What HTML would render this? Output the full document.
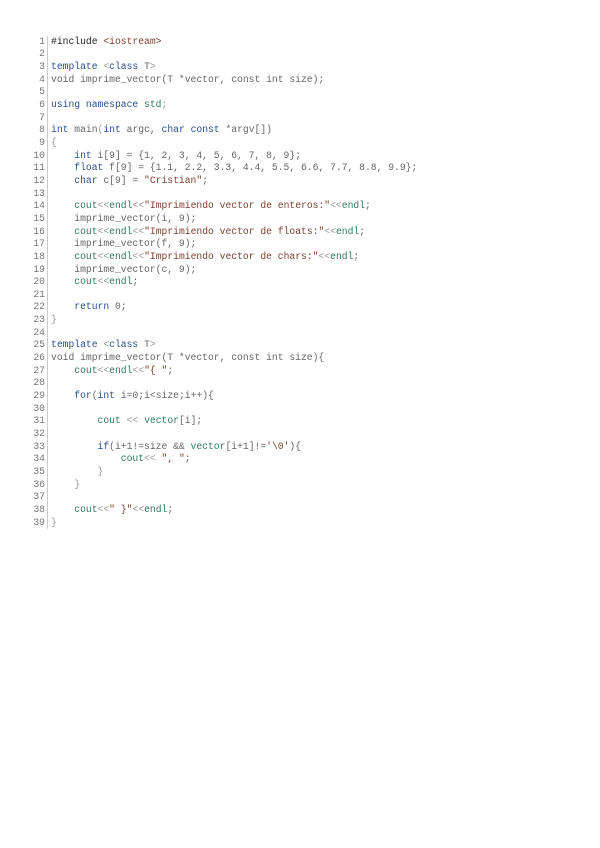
<!DOCTYPE html>
<html><head><meta charset="utf-8"><style>
html,body{margin:0;padding:0;background:#fff;width:600px;height:848px;overflow:hidden}
#c{position:absolute;left:0;top:35.7px;font-family:"Liberation Mono",monospace;font-size:9.7px;line-height:12.66px;color:#666}
.l{display:flex;height:12.66px;white-space:pre}
.n{width:45px;text-align:right;color:#777;padding-right:2px;border-right:1px solid #ccc;margin-right:3px}
.k{color:#2a4f8a}.g{color:#2d7a62}.s{color:#7b3f2e}.p{color:#999}.b{color:#222}
</style></head><body><div id="c">
<div class="l"><span class="n">1</span><span><span class="b">#include</span> <span class="s">&lt;iostream&gt;</span></span></div>
<div class="l"><span class="n">2</span><span></span></div>
<div class="l"><span class="n">3</span><span><span class="k">template</span> <span class="p">&lt;</span><span class="k">class</span> T<span class="p">&gt;</span></span></div>
<div class="l"><span class="n">4</span><span>void imprime_vector(T *vector, const int size);</span></div>
<div class="l"><span class="n">5</span><span></span></div>
<div class="l"><span class="n">6</span><span><span class="k">using namespace</span> <span class="g">std</span><span class="p">;</span></span></div>
<div class="l"><span class="n">7</span><span></span></div>
<div class="l"><span class="n">8</span><span><span class="k">int</span> main<span class="p">(</span><span class="k">int</span> argc, <span class="k">char const</span> *argv[])</span></div>
<div class="l"><span class="n">9</span><span class="p">{</span></div>
<div class="l"><span class="n">10</span><span>    <span class="k">int</span> i[9] = {1, 2, 3, 4, 5, 6, 7, 8, 9};</span></div>
<div class="l"><span class="n">11</span><span>    <span class="k">float</span> f[9] = {1.1, 2.2, 3.3, 4.4, 5.5, 6.6, 7.7, 8.8, 9.9};</span></div>
<div class="l"><span class="n">12</span><span>    <span class="k">char</span> c[9] = <span class="s">"Cristian"</span>;</span></div>
<div class="l"><span class="n">13</span><span></span></div>
<div class="l"><span class="n">14</span><span>    <span class="g">cout</span><span class="p">&lt;&lt;</span><span class="g">endl</span><span class="p">&lt;&lt;</span><span class="s">"Imprimiendo vector de enteros:"</span><span class="p">&lt;&lt;</span><span class="g">endl</span>;</span></div>
<div class="l"><span class="n">15</span><span>    imprime_vector(i, 9);</span></div>
<div class="l"><span class="n">16</span><span>    <span class="g">cout</span><span class="p">&lt;&lt;</span><span class="g">endl</span><span class="p">&lt;&lt;</span><span class="s">"Imprimiendo vector de floats:"</span><span class="p">&lt;&lt;</span><span class="g">endl</span>;</span></div>
<div class="l"><span class="n">17</span><span>    imprime_vector(f, 9);</span></div>
<div class="l"><span class="n">18</span><span>    <span class="g">cout</span><span class="p">&lt;&lt;</span><span class="g">endl</span><span class="p">&lt;&lt;</span><span class="s">"Imprimiendo vector de chars:"</span><span class="p">&lt;&lt;</span><span class="g">endl</span>;</span></div>
<div class="l"><span class="n">19</span><span>    imprime_vector(c, 9);</span></div>
<div class="l"><span class="n">20</span><span>    <span class="g">cout</span><span class="p">&lt;&lt;</span><span class="g">endl</span>;</span></div>
<div class="l"><span class="n">21</span><span></span></div>
<div class="l"><span class="n">22</span><span>    <span class="k">return</span> 0;</span></div>
<div class="l"><span class="n">23</span><span class="p">}</span></div>
<div class="l"><span class="n">24</span><span></span></div>
<div class="l"><span class="n">25</span><span><span class="k">template</span> <span class="p">&lt;</span><span class="k">class</span> T<span class="p">&gt;</span></span></div>
<div class="l"><span class="n">26</span><span>void imprime_vector(T *vector, const int size){</span></div>
<div class="l"><span class="n">27</span><span>    <span class="g">cout</span><span class="p">&lt;&lt;</span><span class="g">endl</span><span class="p">&lt;&lt;</span><span class="s">"{ "</span>;</span></div>
<div class="l"><span class="n">28</span><span></span></div>
<div class="l"><span class="n">29</span><span>    <span class="k">for</span>(<span class="k">int</span> i=0;i&lt;size;i++){</span></div>
<div class="l"><span class="n">30</span><span></span></div>
<div class="l"><span class="n">31</span><span>        <span class="g">cout</span> <span class="p">&lt;&lt;</span> <span class="g">vector</span>[i];</span></div>
<div class="l"><span class="n">32</span><span></span></div>
<div class="l"><span class="n">33</span><span>        <span class="k">if</span>(i+1!=size &amp;&amp; <span class="g">vector</span>[i+1]!=<span class="s">'\0'</span>){</span></div>
<div class="l"><span class="n">34</span><span>            <span class="g">cout</span><span class="p">&lt;&lt;</span> <span class="s">", "</span>;</span></div>
<div class="l"><span class="n">35</span><span class="p">        }</span></div>
<div class="l"><span class="n">36</span><span class="p">    }</span></div>
<div class="l"><span class="n">37</span><span></span></div>
<div class="l"><span class="n">38</span><span>    <span class="g">cout</span><span class="p">&lt;&lt;</span><span class="s">" }"</span><span class="p">&lt;&lt;</span><span class="g">endl</span>;</span></div>
<div class="l"><span class="n">39</span><span class="p">}</span></div>
</div></body></html>
